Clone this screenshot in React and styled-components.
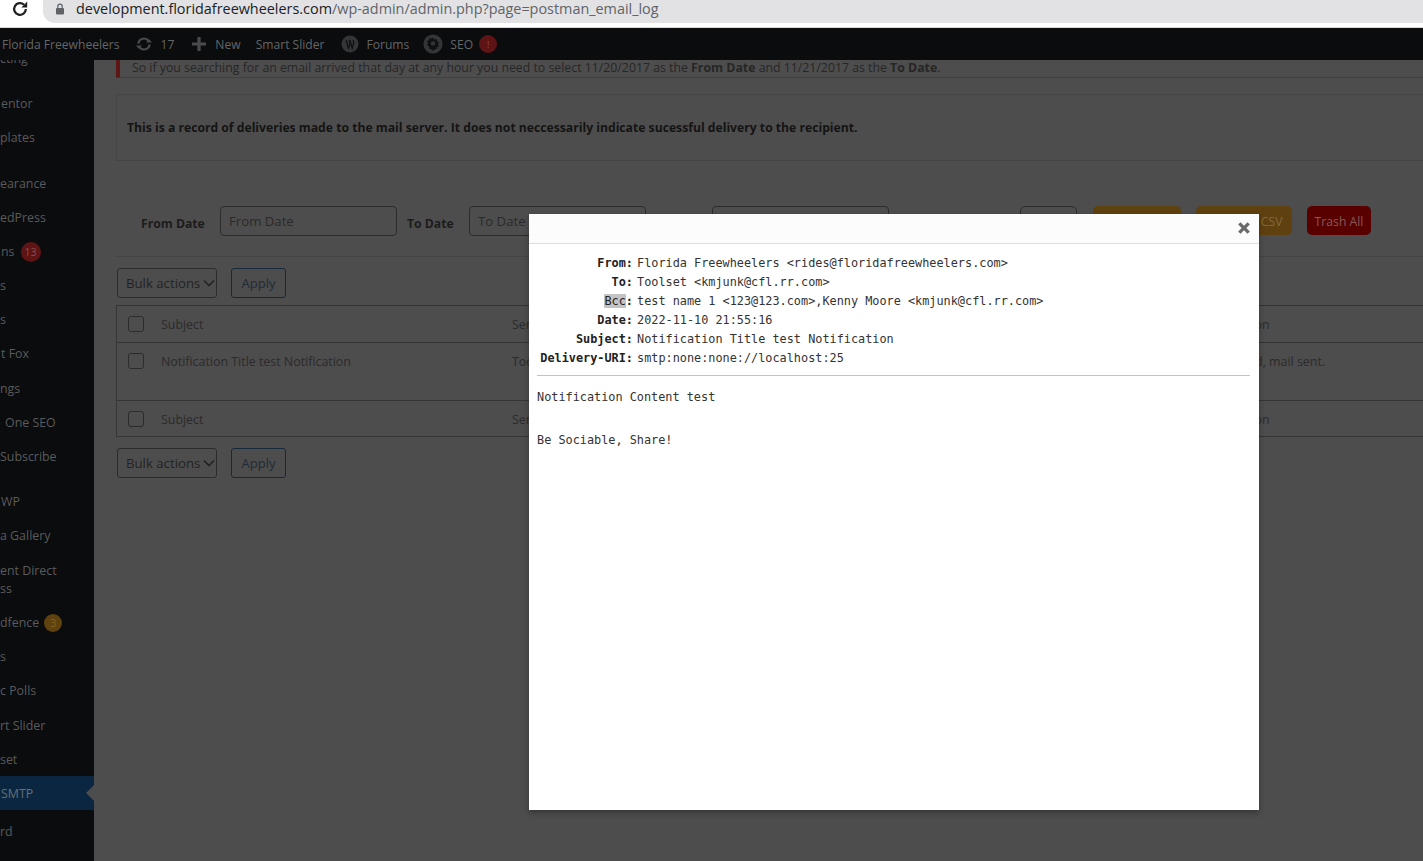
import React from 'react';
import styled, { createGlobalStyle } from 'styled-components';

const GlobalStyle = createGlobalStyle`
  html, body {
    margin: 0;
    padding: 0;
    height: 861px;
    overflow: hidden;
    background: #4d4d4d;
  }
  * {
    box-sizing: border-box;
  }
`;

const Page = styled.div`
  position: relative;
  width: 1423px;
  height: 861px;
  overflow: hidden;
  font-family: "Open Sans", "Liberation Sans", sans-serif;
  font-size: 12.4px;
  color: #222;
`;

const BrowserBar = styled.div`
  height: 28px;
  background: #fff;
  border-bottom: 1px solid #d8d8d8;
  display: flex;
  align-items: flex-start;
  padding-left: 11px;
`;

const Reload = styled.div`
  width: 32px;
  height: 18px;
  display: flex;
  align-items: center;
`;

const AddressPill = styled.div`
  flex: 1;
  height: 23px;
  background: #e2e2e4;
  border-bottom-left-radius: 12px;
  display: flex;
  align-items: center;
  padding: 0 0 6px 12px;
  gap: 11px;
`;

const Url = styled.span`
  font-family: "Open Sans", sans-serif;
  font-size: 14.4px;
  color: #5f6368;
  white-space: nowrap;
`;

const UrlHost = styled.span`
  color: #202124;
`;

const AdminBar = styled.div`
  height: 32px;
  background: #0a0c0e;
  display: flex;
  align-items: center;
  font-size: 12.1px;
  color: #656667;
  white-space: nowrap;
`;

const BarItem = styled.div`
  display: flex;
  align-items: center;
  gap: ${({ $gap }) => $gap || 7}px;
  margin-left: ${({ $left }) => $left || 0}px;
`;

const BarBadge = styled.span`
  width: 18px;
  height: 18px;
  margin-left: -1px;
  border-radius: 50%;
  background: #5e1414;
  color: #875050;
  font-size: 9px;
  display: flex;
  align-items: center;
  justify-content: center;
`;

const Main = styled.div`
  display: flex;
  height: 801px;
`;

const Sidebar = styled.div`
  width: 94px;
  flex: none;
  background: #0a0c0e;
  overflow: hidden;
  color: #5a5b5c;
  font-size: 12.4px;
`;

const SideList = styled.div`
  margin-top: -19px;
`;

const SideRow = styled.div`
  position: relative;
  display: flex;
  align-items: center;
  gap: 3px;
  min-height: 34.2px;
  padding: 8px 0 6px ${({ $indent }) => $indent || 0}px;
  line-height: 18.2px;
  margin-top: ${({ $sep }) => $sep || 0}px;
  background: ${({ $active }) => ($active ? '#0a2640' : 'transparent')};
  color: ${({ $active }) => ($active ? '#637079' : 'inherit')};
  white-space: pre-line;
`;

const ActiveArrow = styled.span`
  position: absolute;
  right: 0;
  top: 9px;
  border: 8px solid transparent;
  border-left: 0;
  border-right-color: #4d4d4d;
`;

const SideBadge = styled.span`
  min-width: ${({ $wide }) => ($wide ? 20 : 18)}px;
  height: ${({ $wide }) => ($wide ? 20 : 18)}px;
  border-radius: 50%;
  background: ${({ $color }) => $color};
  color: ${({ $text }) => $text};
  font-size: 10.5px;
  display: flex;
  align-items: center;
  justify-content: center;
  margin-left: ${({ $wide }) => ($wide ? 3 : 2)}px;
`;

const Content = styled.div`
  flex: 1;
  min-width: 0;
  overflow: hidden;
  padding-left: 22px;
`;

const Notice = styled.div`
  height: 18px;
  border-left: 4px solid #5e1616;
  border-bottom: 1px solid #404040;
  padding-left: 12px;
  font-size: 12.3px;
  line-height: 16px;
  color: #262626;
  white-space: nowrap;
`;

const InfoBox = styled.div`
  margin-top: 16px;
  height: 67px;
  border: 1px solid #454545;
  border-right: 0;
  padding-left: 10px;
  display: flex;
  align-items: center;
  font-weight: 700;
  font-size: 12.18px;
  color: #141414;
  white-space: nowrap;
`;

const FilterRow = styled.div`
  margin-top: 45px;
  height: 51px;
  border-bottom: 1px solid #454545;
  display: flex;
  align-items: flex-start;
  padding-left: 25px;
  white-space: nowrap;
`;

const FilterLabel = styled.label`
  font-weight: 700;
  font-size: 12.2px;
  color: #1c1c1c;
  margin-left: ${({ $left }) => $left || 0}px;
  width: ${({ $width }) => $width}px;
  line-height: 36px;
`;

const DateInput = styled.div`
  width: 177px;
  height: 30px;
  border: 1px solid #2c2c2c;
  border-radius: 4px;
  padding-left: 8px;
  line-height: 29px;
  font-size: 13.2px;
  color: #2a2a2a;
  margin-left: ${({ $left }) => $left || 0}px;
`;

const FilterButton = styled.div`
  width: ${({ $width }) => $width}px;
  height: 29px;
  padding-top: 1px;
  margin-left: ${({ $left }) => $left || 0}px;
  border-radius: 5px;
  border: 1px solid ${({ $border }) => $border || 'transparent'};
  background: ${({ $bg }) => $bg || 'transparent'};
  color: ${({ $color }) => $color || '#2a2a2a'};
  display: flex;
  align-items: center;
  justify-content: center;
  font-size: 12.2px;
`;

const ActionRow = styled.div`
  display: flex;
  gap: 14px;
  margin-top: ${({ $top }) => $top}px;
  padding-left: 1px;
`;

const BulkSelect = styled.div`
  width: 100px;
  height: 30px;
  border: 1px solid #2c2c2c;
  border-radius: 3px;
  display: flex;
  align-items: center;
  justify-content: space-between;
  padding: 0 1px 0 8px;
  font-size: 13.2px;
  color: #232323;
  white-space: nowrap;
`;

const ApplyButton = styled.div`
  width: 55px;
  height: 30px;
  border: 1px solid #16293a;
  border-radius: 3px;
  display: flex;
  align-items: center;
  justify-content: center;
  font-size: 13px;
  color: #1f2b36;
`;

const LogTable = styled.div`
  margin-top: 7px;
  border: 1px solid #353535;
  border-right: 0;
  white-space: nowrap;
`;

const LogRow = styled.div`
  display: grid;
  grid-template-columns: 44px 351px 710px 1fr;
  height: ${({ $height }) => $height}px;
  padding-top: 10px;
  border-top: ${({ $line }) => ($line ? '1px solid #353535' : '0')};
  font-size: 12.4px;
  color: #2b2b2b;
`;

const Cell = styled.div`
  line-height: 18px;
`;

const CheckBox = styled.span`
  display: block;
  width: 16px;
  height: 16px;
  margin-left: 11px;
  border: 1px solid #2c2c2c;
  border-radius: 3px;
`;

const Modal = styled.div`
  position: absolute;
  left: 529px;
  top: 214px;
  width: 730px;
  height: 596px;
  background: #fff;
  box-shadow: 0 3px 6px rgba(0, 0, 0, 0.3);
`;

const ModalHead = styled.div`
  height: 30px;
  background: #fcfcfc;
  border-bottom: 1px solid #ddd;
  display: flex;
  justify-content: flex-end;
  align-items: flex-start;
  padding: 7px 8px 0 0;
`;

const ModalBody = styled.div`
  padding: 10px 9px 0 8px;
  font-family: "DejaVu Sans Mono", "Liberation Mono", monospace;
  font-size: 11.85px;
  color: #333;
`;

const Headers = styled.div`
  display: grid;
  grid-template-columns: 96px 1fr;
  column-gap: 4px;
  line-height: 19px;
  padding-bottom: 7px;
  border-bottom: 1px solid #c4c4c4;
`;

const HeaderName = styled.div`
  text-align: right;
  font-weight: 700;
  color: #222;
  white-space: nowrap;
`;

const Mark = styled.span`
  background: #c4c4c4;
  font-weight: 400;
`;

const MessageLine = styled.div`
  line-height: 19px;
  margin-top: ${({ $top }) => $top}px;
`;

const SIDE_ITEMS = [
  { label: 'cting' },
  { label: 'entor', sep: 11, indent: 1 },
  { label: 'plates' },
  { label: 'earance', sep: 11 },
  { label: 'edPress' },
  { label: 'ns', indent: 1, badge: { text: '13', color: '#5e1414', ink: '#875050', wide: true } },
  { label: 's' },
  { label: 's' },
  { label: 't Fox', indent: 1 },
  { label: 'ngs' },
  { label: 'One SEO', indent: 5 },
  { label: 'Subscribe' },
  { label: 'WP', sep: 11, indent: 1 },
  { label: 'a Gallery' },
  { label: 'ent Direct\nss', sep: 1 },
  { label: 'dfence', sep: 1, badge: { text: '3', color: '#5f420e', ink: '#806420' } },
  { label: 's' },
  { label: 'c Polls' },
  { label: 'rt Slider' },
  { label: 'set' },
  { label: 'SMTP', indent: 1, active: true },
  { label: 'rd', sep: 4 },
];

const HEADERS = [
  ['From:', 'Florida Freewheelers <rides@floridafreewheelers.com>'],
  ['To:', 'Toolset <kmjunk@cfl.rr.com>'],
  ['Bcc:', 'test name 1 <123@123.com>,Kenny Moore <kmjunk@cfl.rr.com>'],
  ['Date:', '2022-11-10 21:55:16'],
  ['Subject:', 'Notification Title test Notification'],
  ['Delivery-URI:', 'smtp:none:none://localhost:25'],
];

const ReloadIcon = () => (
  <svg width="18" height="18" viewBox="0 0 16 16" fill="none">
    <path d="M13.2 8a5.2 5.2 0 1 1-1.6-3.8" stroke="#202124" strokeWidth="2" />
    <path d="M14.4 1.4v5.2H9.2z" fill="#202124" />
  </svg>
);

const LockIcon = () => (
  <svg width="10" height="12" viewBox="0 0 10 12">
    <rect x="1" y="5" width="8" height="6.5" rx="1" fill="#5f6368" />
    <path d="M2.8 5V3.4a2.2 2.2 0 0 1 4.4 0V5" fill="none" stroke="#5f6368" strokeWidth="1.2" />
  </svg>
);

const SyncIcon = () => (
  <svg width="18" height="14" viewBox="0 0 18 14" fill="none">
    <path d="M3.4 6.6A5.6 5.6 0 0 1 13.6 4" stroke="#4a4b4c" strokeWidth="2.2" />
    <path d="M14.6 7.4A5.6 5.6 0 0 1 4.4 10" stroke="#4a4b4c" strokeWidth="2.2" />
    <path d="M11 5.6h6l-3-3.6zM7 8.4H1l3 3.6z" fill="#4a4b4c" />
  </svg>
);

const PlusIcon = () => (
  <svg width="14" height="14" viewBox="0 0 14 14">
    <path d="M5.4 0h3.2v5.4H14v3.2H8.6V14H5.4V8.6H0V5.4h5.4z" fill="#4a4b4c" />
  </svg>
);

const WpIcon = () => (
  <svg width="18" height="18" viewBox="0 0 18 18" fill="none">
    <circle cx="9" cy="9" r="8.5" fill="#343536" />
    <path d="M5.2 5.2l2.3 8 1.7-5-1-3M9 5.2l2.2 8 1.3-4.4c.4-1.5.2-2.4-.5-3.6" stroke="#0f1112" strokeWidth="1.3" />
  </svg>
);

const GearIcon = () => (
  <svg width="20" height="20" viewBox="0 0 20 20" fill="none">
    <circle cx="10" cy="10" r="9.6" fill="#343536" />
    <path d="M10 3.6l1.3 2 2.3-.7.4 2.4 2.2 1-1.3 2 1.3 2-2.2.9-.4 1.7H6.4L6 12.2l-2.2-.9 1.3-2-1.3-2 2.2-1 .4-2.4 2.3.7z" fill="#0f1112" />
    <circle cx="10" cy="9.4" r="2.2" fill="#343536" />
    <path d="M7.6 14.8h4.8L10 17z" fill="#0f1112" />
  </svg>
);

const ChevronIcon = () => (
  <svg width="12" height="8" viewBox="0 0 12 8" fill="none">
    <path d="M1 1.5l5 5 5-5" stroke="#232323" strokeWidth="1.6" />
  </svg>
);

const CloseIcon = () => (
  <svg width="14" height="14" viewBox="0 0 12 12">
    <path d="M1 3l2-2 3 3 3-3 2 2-3 3 3 3-2 2-3-3-3 3-2-2 3-3z" fill="#6a6a6a" />
  </svg>
);

const BulkActions = ({ top }) => (
  <ActionRow $top={top}>
    <BulkSelect>
      Bulk actions
      <ChevronIcon />
    </BulkSelect>
    <ApplyButton>Apply</ApplyButton>
  </ActionRow>
);

const App = () => {
  return (
    <Page>
      <GlobalStyle />
      <BrowserBar>
        <Reload>
          <ReloadIcon />
        </Reload>
        <AddressPill>
          <LockIcon />
          <Url>
            <UrlHost>development.floridafreewheelers.com</UrlHost>
            /wp-admin/admin.php?page=postman_email_log
          </Url>
        </AddressPill>
      </BrowserBar>

      <AdminBar>
        <BarItem $left={2}>Florida Freewheelers</BarItem>
        <BarItem $left={15} $gap={8}>
          <SyncIcon />
          17
        </BarItem>
        <BarItem $left={18} $gap={9}>
          <PlusIcon />
          New
        </BarItem>
        <BarItem $left={15}>Smart Slider</BarItem>
        <BarItem $left={17}>
          <WpIcon />
          Forums
        </BarItem>
        <BarItem $left={14} $gap={7}>
          <GearIcon />
          SEO
          <BarBadge>!</BarBadge>
        </BarItem>
      </AdminBar>

      <Main>
        <Sidebar>
          <SideList>
            {SIDE_ITEMS.map((item, i) => (
              <SideRow key={i} $sep={item.sep} $indent={item.indent} $active={item.active}>
                {item.label}
                {item.badge && (
                  <SideBadge $color={item.badge.color} $text={item.badge.ink} $wide={item.badge.wide}>
                    {item.badge.text}
                  </SideBadge>
                )}
                {item.active && <ActiveArrow />}
              </SideRow>
            ))}
          </SideList>
        </Sidebar>

        <Content>
          <Notice>
            So if you searching for an email arrived that day at any hour you need to select 11/20/2017 as
            the <b>From Date</b> and 11/21/2017 as the <b>To Date</b>.
          </Notice>
          <InfoBox>
            This is a record of deliveries made to the mail server. It does not neccessarily indicate
            sucessful delivery to the recipient.
          </InfoBox>

          <FilterRow>
            <FilterLabel $width={79}>From Date</FilterLabel>
            <DateInput>From Date</DateInput>
            <FilterLabel $left={10} $width={62}>To Date</FilterLabel>
            <DateInput>To Date</DateInput>
            <DateInput $left={66}>Search</DateInput>
            <FilterButton $left={131} $width={57} $border="#2c2c2c">Filter</FilterButton>
            <FilterButton $left={16} $width={88} $bg="#5f400f" $color="#836a3e">Trash</FilterButton>
            <FilterButton $left={15} $width={96} $bg="#5f400f" $color="#836a3e">Export to CSV</FilterButton>
            <FilterButton $left={15} $width={64} $bg="#580000" $color="#875858">Trash All</FilterButton>
          </FilterRow>

          <BulkActions top={11} />

          <LogTable>
            <LogRow $height={36}>
              <CheckBox />
              <Cell>Subject</Cell>
              <Cell>Sent To</Cell>
              <Cell>Solution</Cell>
            </LogRow>
            <LogRow $height={58} $line>
              <CheckBox />
              <Cell>Notification Title test Notification</Cell>
              <Cell>Toolset</Cell>
              <Cell>Passed, mail sent.</Cell>
            </LogRow>
            <LogRow $height={36} $line>
              <CheckBox />
              <Cell>Subject</Cell>
              <Cell>Sent To</Cell>
              <Cell>Solution</Cell>
            </LogRow>
          </LogTable>

          <BulkActions top={11} />
        </Content>
      </Main>

      <Modal>
        <ModalHead>
          <CloseIcon />
        </ModalHead>
        <ModalBody>
          <Headers>
            {HEADERS.map(([name, value]) => (
              <React.Fragment key={name}>
                <HeaderName>
                  {name === 'Bcc:' ? (
                    <>
                      <Mark>Bcc</Mark>:
                    </>
                  ) : (
                    name
                  )}
                </HeaderName>
                <div>{value}</div>
              </React.Fragment>
            ))}
          </Headers>
          <MessageLine $top={12}>Notification Content test</MessageLine>
          <MessageLine $top={24}>Be Sociable, Share!</MessageLine>
        </ModalBody>
      </Modal>
    </Page>
  );
};

export default App;
